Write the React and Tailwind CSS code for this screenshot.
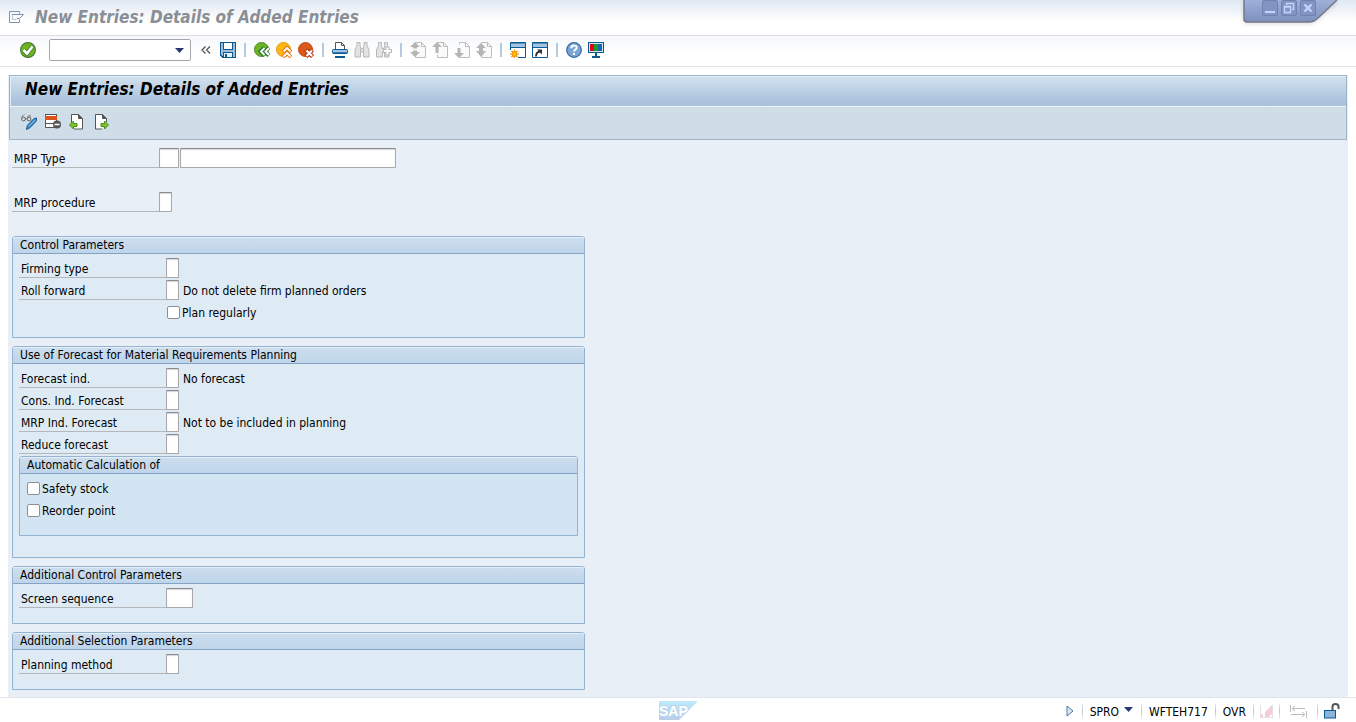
import { useState } from 'react'

// Icons
function Icon({ w = 16, h = 16, crisp = false, children }) {
  return (
    <svg width={w} height={h} viewBox={`0 0 ${w} ${h}`} fill="none" shapeRendering={crisp ? 'crispEdges' : 'auto'} className="block shrink-0" aria-hidden="true">
      {children}
    </svg>
  )
}

const MenuIcon = () => (
  <Icon w={15} h={12}>
    <path d="M10.500 2.500V.5H.5v11h10V8.500" stroke="#7f8fae" />
    <path d="M3 3.500h11.500L10.500 7.500H8" stroke="#7f8fae" />
    <path d="M3.500 4v4.500h4" stroke="#b7c1d4" />
  </Icon>
)

const EnterIcon = () => (
  <Icon>
    <circle cx="8" cy="8" r="7.4" fill="#6fb520" stroke="#4a7d3c" strokeWidth="1.2" />
    <path d="M3.500 8l3.500 3.500L12.500 4.500" stroke="#3f7f2a" strokeWidth="4.400" />
    <path d="M3.500 8l3.500 3.500L12.500 4.500" stroke="#fff" strokeWidth="2.800" />
  </Icon>
)

const SaveIcon = () => (
  <Icon crisp>
    <path d="M0 0h16v16H2l-2-2z" fill="#0b5a94" />
    <path d="M1 1h2v7h10V1h2v14h-2v-5H3v4.500L1 13z" fill="#9dbfdd" />
    <path d="M4 1h8v6H4z" fill="#fff" />
    <path d="M4 11h8v4H4z" fill="#e8f1f8" />
    <path d="M5 12h2v3H5z" fill="#0b5a94" />
  </Icon>
)

const BackIcon = () => (
  <Icon>
    <circle cx="7.500" cy="7.500" r="7" fill="#6fb520" stroke="#4a8a35" />
    <path d="M10.500 5.500L6.500 9.500l4 4M15 5.500L11 9.500l4 4" stroke="#2f7a35" strokeWidth="4" />
    <path d="M10.500 6L7 9.500l3.500 3.500M15 6l-3.500 3.500L15 13" stroke="#fff" strokeWidth="1.800" />
  </Icon>
)

const ExitIcon = () => (
  <Icon>
    <circle cx="7.500" cy="7.500" r="7" fill="#fdb813" stroke="#e9961a" />
    <path d="M7 10l4-4 4 4M7 15l4-4 4 4" stroke="#ea7a12" strokeWidth="4" />
    <path d="M7.500 9.500L11 6l3.500 3.500M7.500 14.500L11 11l3.500 3.500" stroke="#fff" strokeWidth="1.800" />
  </Icon>
)

const CancelIcon = () => (
  <Icon>
    <circle cx="7.500" cy="7.500" r="7" fill="#d9591a" stroke="#bf4a15" />
    <path d="M8 8l6.500 6.500M14.500 8L8 14.500" stroke="#b5330f" strokeWidth="4.400" />
    <path d="M8.500 8.500l5.500 5.500M14 8.500L8.500 14" stroke="#fff" strokeWidth="2.200" />
  </Icon>
)

const PrintIcon = () => (
  <Icon>
    <path d="M3.500 7V.5h6l3 3V7" fill="#fff" stroke="#555" />
    <path d="M9.500.5v3h3" stroke="#555" />
    <rect x=".5" y="7.500" width="15" height="4" rx="1" fill="#a3c3e0" stroke="#0b5a94" />
    <path d="M1 11h14" stroke="#0b5a94" strokeWidth="1.400" />
    <path d="M3 15h10" stroke="#0b5a94" strokeWidth="2" />
  </Icon>
)

const FindIcon = () => (
  <Icon>
    <path d="M3 .5h3v3l1 3h2l1-3v-3h3v3l2 4.500v7H9.500V10h-3v5H1V8l2-4.500z" fill="#e3e3e3" stroke="#b8b8b8" />
    <path d="M6.500 6.500V10M9.500 6.500V10" stroke="#b8b8b8" />
  </Icon>
)

const FindNextIcon = () => (
  <Icon>
    <path d="M2.500.5h3v3L6 6.500h2l.5-3v-3h3v3l1.500 4.500v7H8.500V10h-2v5h-6V8l2-4.500z" fill="#e3e3e3" stroke="#b8b8b8" />
    <path d="M11.500 4.500v9M7 9h9" stroke="#b8b8b8" strokeWidth="4" />
    <path d="M11.500 5.500v7M8 9h7" stroke="#fff" strokeWidth="2" />
  </Icon>
)

// Greyed out sheet with one or two arrows on its left side
function PageIcon({ arrows }) {
  return (
    <Icon>
      <path d="M5.500 2.500v-2h6l4 4v11h-10v-3" fill="#fafafa" stroke="#bdbdbd" />
      <path d="M11.500.5v4h4" stroke="#bdbdbd" />
      {arrows === 'first' && <path d="M5 0L0 5h3v1.500h4V5h3zM5 15L0 10h3V8.500h4V10h3z" fill="#b5b5b5" />}
      {arrows === 'prev' && <path d="M5 0L0 5h3.500v6h3V5H10z" fill="#b5b5b5" />}
      {arrows === 'next' && <path d="M5 16L0 11h3.500V6h3v5H10z" fill="#b5b5b5" />}
      {arrows === 'last' && <path d="M5 1L0 6h3v3H0l5 6 5-6H7V6h3z" fill="#b5b5b5" />}
    </Icon>
  )
}

const NewSessionIcon = () => (
  <Icon>
    <path d="M.5 8V.5h15v15H8" fill="#fff" stroke="#0b5a94" />
    <path d="M1 1h14v4H1z" fill="#a3c3e0" />
    <path d="M0 5.500h16M.5 1h15" stroke="#0b5a94" />
    <path d="M4.500 7.500v9M0 12h9M1.500 9l6 6M7.500 9l-6 6" stroke="#f08a00" strokeWidth="1.200" />
    <circle cx="4.500" cy="12" r="2.400" fill="#ffc20e" stroke="#f08a00" />
  </Icon>
)

const ShortcutIcon = () => (
  <Icon>
    <path d="M.5.5h15v15H.5z" fill="#fff" stroke="#0b5a94" />
    <path d="M1 1h14v4H1z" fill="#a3c3e0" />
    <path d="M0 5.500h16M.5 1h15" stroke="#0b5a94" />
    <path d="M4 14.500c0-3 1-4.500 4-5" stroke="#333" strokeWidth="1.800" />
    <path d="M5 7.500h5v5z" fill="#333" />
  </Icon>
)

const HelpIcon = () => (
  <Icon>
    <circle cx="8" cy="8" r="7.300" fill="#7ba6d2" stroke="#2f6ba3" strokeWidth="1.200" />
    <path d="M5.300 6.200c0-3.600 5.400-3.400 5.400-.5C10.700 7.500 8 7.500 8 9.600" stroke="#fff" strokeWidth="2" />
    <path d="M7 11h2v2H7z" fill="#fff" />
  </Icon>
)

const LayoutIcon = () => (
  <Icon crisp>
    <path d="M0 0h16v11H0z" fill="#0b5a94" />
    <path d="M1 1h14v9H1z" fill="#d7e6f3" />
    <path d="M2 2h4v7H2z" fill="#e2001a" />
    <path d="M6 2h4v7H6z" fill="#1f9a2e" />
    <path d="M10 2h4v7h-4z" fill="#1468b4" />
    <path d="M7 11h2v3H7zM4 14h8v2H4z" fill="#0b5a94" />
  </Icon>
)

const ChangeIcon = () => (
  <Icon>
    <circle cx="2.500" cy="5" r="1.900" stroke="#666" />
    <circle cx="8" cy="5" r="1.900" stroke="#666" />
    <path d="M4.300 4.800h2M.7 4.500c0-2 1.500-3.500 2.800-4M6.300 4c.2-1.500 1.500-2.800 2.900-2.700v2" stroke="#777" strokeWidth=".9" />
    <path d="M5.500 15.500l.8-4L13 4.500l2.500-.5.300 2.500-6.600 7z" fill="#3f8fc9" stroke="#14598f" />
    <path d="M7.800 12.500l6-6.500" stroke="#8ec0e4" />
  </Icon>
)

const DeleteRowIcon = () => (
  <Icon>
    <path d="M.5.500h11v13H.5z" fill="#fff" stroke="#555" />
    <path d="M0 .5h12M0 9.500h9" stroke="#555" />
    <path d="M0 2h12v4H0z" fill="#dd5417" />
    <circle cx="12" cy="10.500" r="4" fill="#555" />
    <path d="M9.500 10.500h5" stroke="#fff" strokeWidth="1.600" />
  </Icon>
)

const PrevEntryIcon = () => (
  <Icon>
    <path d="M2.500 9V.5h7l4 4v10.500H5" fill="#fff" stroke="#555" />
    <path d="M9.500.5v4h4" fill="#555" stroke="#555" />
    <path d="M.5 11L4.500 7v2.500h3.500v3H4.500V15z" fill="#7fc31c" stroke="#4c8f23" />
  </Icon>
)

const NextEntryIcon = () => (
  <Icon>
    <path d="M9 15H2.500V.5h7l4 4V8" fill="#fff" stroke="#555" />
    <path d="M9.500.5v4h4" fill="#555" stroke="#555" />
    <path d="M15.500 11l-4-4v2.500H8v3h3.500V15z" fill="#7fc31c" stroke="#4c8f23" />
  </Icon>
)

const SapLogo = () => (
  <svg width="39" height="19" viewBox="0 0 39 19" className="block" role="img" aria-label="SAP">
    <defs>
      <linearGradient id="sapFill" x1="0" y1="0" x2="0" y2="1">
        <stop offset="0" stopColor="#bdeafb" />
        <stop offset="1" stopColor="#bccbe9" />
      </linearGradient>
    </defs>
    <path d="M0 0h39L20 19H0z" fill="url(#sapFill)" />
    <text x="0" y="15" fontFamily="Liberation Sans, sans-serif" fontSize="14" fontWeight="700" fill="#fff" stroke="#b4d3ee" strokeWidth="1.500" paintOrder="stroke">SAP</text>
  </svg>
)

// Standard toolbar, null marks a separator
const TOOLBAR = [
  { label: 'Save', icon: <SaveIcon /> },
  null,
  { label: 'Back', icon: <BackIcon /> },
  { label: 'Exit', icon: <ExitIcon /> },
  { label: 'Cancel', icon: <CancelIcon /> },
  null,
  { label: 'Print', icon: <PrintIcon /> },
  { label: 'Find', icon: <FindIcon />, disabled: true },
  { label: 'Find next', icon: <FindNextIcon />, disabled: true },
  null,
  { label: 'First page', icon: <PageIcon arrows="first" />, disabled: true },
  { label: 'Previous page', icon: <PageIcon arrows="prev" />, disabled: true },
  { label: 'Next page', icon: <PageIcon arrows="next" />, disabled: true },
  { label: 'Last page', icon: <PageIcon arrows="last" />, disabled: true },
  null,
  { label: 'New session', icon: <NewSessionIcon /> },
  { label: 'Create shortcut', icon: <ShortcutIcon /> },
  null,
  { label: 'Help', icon: <HelpIcon /> },
  { label: 'Customize local layout', icon: <LayoutIcon /> },
]

const ENTRY_ACTIONS = [
  { label: 'Display/Change', icon: <ChangeIcon /> },
  { label: 'Delete', icon: <DeleteRowIcon /> },
  { label: 'Previous entry', icon: <PrevEntryIcon /> },
  { label: 'Next entry', icon: <NextEntryIcon /> },
]

const inputClass = 'h-5 rounded-[1px] border border-[#a9a9ab] border-t-[#8c8c90] bg-white px-0.5 shadow-[inset_0_1px_1px_#d4d4da] outline-none focus:border-[#e8a000]'

function Field({ id, label, width = 'w-[13px]', maxLength = 1, text, children }) {
  return (
    <div className="flex h-[22px] items-center">
      <label htmlFor={id} className="h-5 w-[147px] shrink-0 border-b border-[#b5b8bb] pl-0.5 leading-[22px]">{label}</label>
      <input id={id} type="text" maxLength={maxLength} className={`${inputClass} ${width}`} />
      {text && <span className="pt-px pl-1">{text}</span>}
      {children}
    </div>
  )
}

function Check({ id, label }) {
  return (
    <div className="flex h-[22px] items-center">
      <input id={id} type="checkbox" className="size-[13px] appearance-none rounded-[2px] border border-[#8f8f93] bg-white checked:bg-[#4a7db5]" />
      <label htmlFor={id} className="pt-px pl-0.5">{label}</label>
    </div>
  )
}

function Group({ title, inner = false, className = '', children }) {
  return (
    <section className={`rounded-t-[3px] border border-[#94b3d1] ${inner ? 'bg-[#d3e5f3]' : 'bg-[#deebf5]'} ${className}`}>
      <h2 className="h-[17px] rounded-t-[2px] border-b border-[#86a3c6] bg-linear-to-b from-[#cddded] to-[#bfd5ea] pl-[7px] leading-4 shadow-[inset_0_1px_0_#e6eff7]">{title}</h2>
      <div className="px-1.5 pt-[3px]">{children}</div>
    </section>
  )
}

const StatusSep = () => <span className="h-4 w-px bg-linear-to-b from-[#eef1f4] via-[#bcc4cf] to-[#eef1f4]" />

export default function App() {
  const [command, setCommand] = useState('')

  return (
    <div className="flex min-h-screen flex-col bg-white font-['DejaVu_Sans_Condensed','DejaVu_Sans',sans-serif] text-xs text-black">
      {/* Window title */}
      <header className="relative flex h-9 items-center border-b border-[#dcdee1] bg-linear-to-b from-[#dfe8f2] to-white to-60% pr-32 pb-0.5 pl-[9px]">
        <button type="button" aria-label="Menu"><MenuIcon /></button>
        <h1 className="pl-[11px] text-[17px] leading-5 font-bold text-[#8a8f96] italic">New Entries: Details of Added Entries</h1>
        <div className="absolute top-0 right-[18px] h-6 w-[95px]">
          <svg width="95" height="24" viewBox="0 0 95 24" className="block drop-shadow-sm" aria-hidden="true">
            <defs>
              <linearGradient id="winFill" x1="0" y1="0" x2="0" y2="1">
                <stop offset="0" stopColor="#9fb0d8" />
                <stop offset="1" stopColor="#7d8fbd" />
              </linearGradient>
            </defs>
            <path d="M1 0v19q0 3 3 3h62q5 0 9-4L94 0z" fill="url(#winFill)" />
            <path d="M1 0v19q0 3 3 3h62q5 0 9-4L94 0" fill="none" stroke="#73798a" strokeWidth="1.500" />
          </svg>
          <div className="absolute top-0 left-[19px] flex gap-[3px]">
            <button type="button" aria-label="Minimize" className="h-4 w-4 rounded-[2px] border border-[#7081af] bg-[#8394c2]">
              <Icon w={14} h={14} crisp><path d="M2 10h10v2H2z" fill="#c3d5fa" /></Icon>
            </button>
            <button type="button" aria-label="Restore" className="h-4 w-4 rounded-[2px] border border-[#7081af] bg-[#8394c2]">
              <Icon w={14} h={14}><path d="M4.500 4V2.500h7v6H10M2.500 5.500h6v6h-6zM2.500 6h6" stroke="#c3d5fa" strokeWidth="1.400" /></Icon>
            </button>
            <button type="button" aria-label="Close" className="h-4 w-4 rounded-[2px] border border-[#7081af] bg-[#8394c2]">
              <Icon w={14} h={14}><path d="M3.500 3.500l7 7M10.500 3.500l-7 7" stroke="#c3d5fa" strokeWidth="2.400" /></Icon>
            </button>
          </div>
        </div>
      </header>

      {/* Standard toolbar */}
      <nav className="flex h-[31px] items-center border-b border-[#dde2ea] bg-linear-to-b from-[#f6f8fb] to-white to-60% pb-0.5 pl-5">
        <button type="button" aria-label="Enter"><EnterIcon /></button>
        <div className="ml-[13px] flex h-[22px] w-[142px] items-center rounded-[2px] border border-[#a3a7ad] bg-white">
          <input type="text" aria-label="Command" value={command} onChange={e => setCommand(e.target.value)} className="h-full min-w-0 flex-1 px-1 outline-none" />
          <button type="button" aria-label="Command history" className="px-1.5">
            <Icon w={9} h={5}><path d="M0 0h9L4.500 5z" fill="#26386e" /></Icon>
          </button>
        </div>
        <button type="button" aria-label="Hide command field" className="mr-[9px] ml-2.5">
          <Icon w={10} h={8}><path d="M4.500.5L1 4l3.500 3.500M9 .5L5.500 4 9 7.500" stroke="#555" strokeWidth="1.300" /></Icon>
        </button>
        <div className="flex items-center gap-1.5">
          {TOOLBAR.map((item, idx) => (
            item ? (
              <button key={idx} type="button" aria-label={item.label} disabled={item.disabled}>{item.icon}</button>
            ) : (
              <span key={idx} className="flex w-1.5 justify-center"><span className="h-3.5 w-0.5 bg-[#b5cbe2]" /></span>
            )
          ))}
        </div>
      </nav>

      <main className="mx-2 mt-2 flex-1 rounded-b-[2px] bg-[#e8eff7]">
        {/* Screen title and actions */}
        <div className="mx-px border border-[#9db3c8] bg-[#cfdde8]">
          <h2 className="h-[30px] bg-linear-to-b from-[#d3e2ee] to-[#aac3dc] to-85% pl-[15px] text-[17px] leading-[26px] font-bold italic shadow-[inset_1px_1px_0_#e3edf5]">New Entries: Details of Added Entries</h2>
          <div className="flex h-[33px] items-center gap-2 border-t border-[#edf3f8] pb-0.5 pl-[11px]">
            {ENTRY_ACTIONS.map(action => (
              <button key={action.label} type="button" aria-label={action.label}>{action.icon}</button>
            ))}
          </div>
        </div>

        <form className="pt-[7px] pb-[7px] pl-1" onSubmit={e => e.preventDefault()}>
          <Field id="mrp-type" label="MRP Type" width="w-5" maxLength={2}>
            <input type="text" aria-label="MRP Type description" className={`${inputClass} ml-px w-[216px]`} />
          </Field>
          <div className="mt-[22px]">
            <Field id="mrp-procedure" label="MRP procedure" />
          </div>

          <div className="mt-[23px] flex w-[573px] max-w-full flex-col gap-2">
            <Group title="Control Parameters" className="pb-[14px]">
              <Field id="firming-type" label="Firming type" />
              <Field id="roll-forward" label="Roll forward" text="Do not delete firm planned orders" />
              <div className="pl-[148px]">
                <Check id="plan-regularly" label="Plan regularly" />
              </div>
            </Group>

            <Group title="Use of Forecast for Material Requirements Planning" className="pb-[21px]">
              <Field id="forecast-ind" label="Forecast ind." text="No forecast" />
              <Field id="cons-ind" label="Cons. Ind. Forecast" />
              <Field id="mrp-ind" label="MRP Ind. Forecast" text="Not to be included in planning" />
              <Field id="reduce-forecast" label="Reduce forecast" />
              <Group title="Automatic Calculation of" inner className="mt-px pb-[14px]">
                <div className="pl-px">
                  <Check id="safety-stock" label="Safety stock" />
                  <Check id="reorder-point" label="Reorder point" />
                </div>
              </Group>
            </Group>

            <Group title="Additional Control Parameters" className="pb-[14px]">
              <Field id="screen-sequence" label="Screen sequence" width="w-[27px]" maxLength={3} />
            </Group>

            <Group title="Additional Selection Parameters" className="pb-[14px]">
              <Field id="planning-method" label="Planning method" />
            </Group>
          </div>
        </form>
      </main>

      {/* Status bar */}
      <footer className="grid h-[25px] grid-cols-[1fr_auto_1fr] items-center border-t border-[#e1e5ea]">
        <span />
        <SapLogo />
        <div className="flex items-center justify-end gap-1.5 pt-0.5 pr-4">
          <button type="button" aria-label="Expand status" className="mr-0.5">
            <Icon w={8} h={12}><path d="M1 1v10l6-5z" fill="#dbe8f5" stroke="#4a78a8" /></Icon>
          </button>
          <StatusSep />
          <button type="button" className="flex items-center gap-[5px] px-px pt-px">
            SPRO
            <Icon w={10} h={9}><path d="M0 0h9L4.500 5z" fill="#26386e" /></Icon>
          </button>
          <StatusSep />
          <span className="px-px pt-px">WFTEH717</span>
          <StatusSep />
          <span className="px-px pt-px">OVR</span>
          <StatusSep />
          <Icon w={13} h={13}>
            <path d="M0 13V10l3-1v4zM5 13V7l7-7v9l-5 4z" fill="#f6cdd2" />
            <path d="M.5 0v13M12.500 0v13M0 12.500h12" stroke="#e2e2e4" />
          </Icon>
          <StatusSep />
          <span className="px-1">
            <Icon w={17} h={13}>
              <path d="M.5 0v7M16.500 6v7M2 3.500h13M1 9.500h13M5 1L2 3.500 5 6M12 7l3 2.500L12 12" stroke="#b9bcc0" />
            </Icon>
          </span>
          <StatusSep />
          <Icon>
            <path d="M8.500 7V3.500q0-2.500 3-2.500t3 2.500V6" stroke="#555" strokeWidth="2" />
            <rect x=".5" y="7.500" width="11" height="7.500" fill="#8db5da" stroke="#0b5a94" />
          </Icon>
        </div>
      </footer>
    </div>
  )
}
